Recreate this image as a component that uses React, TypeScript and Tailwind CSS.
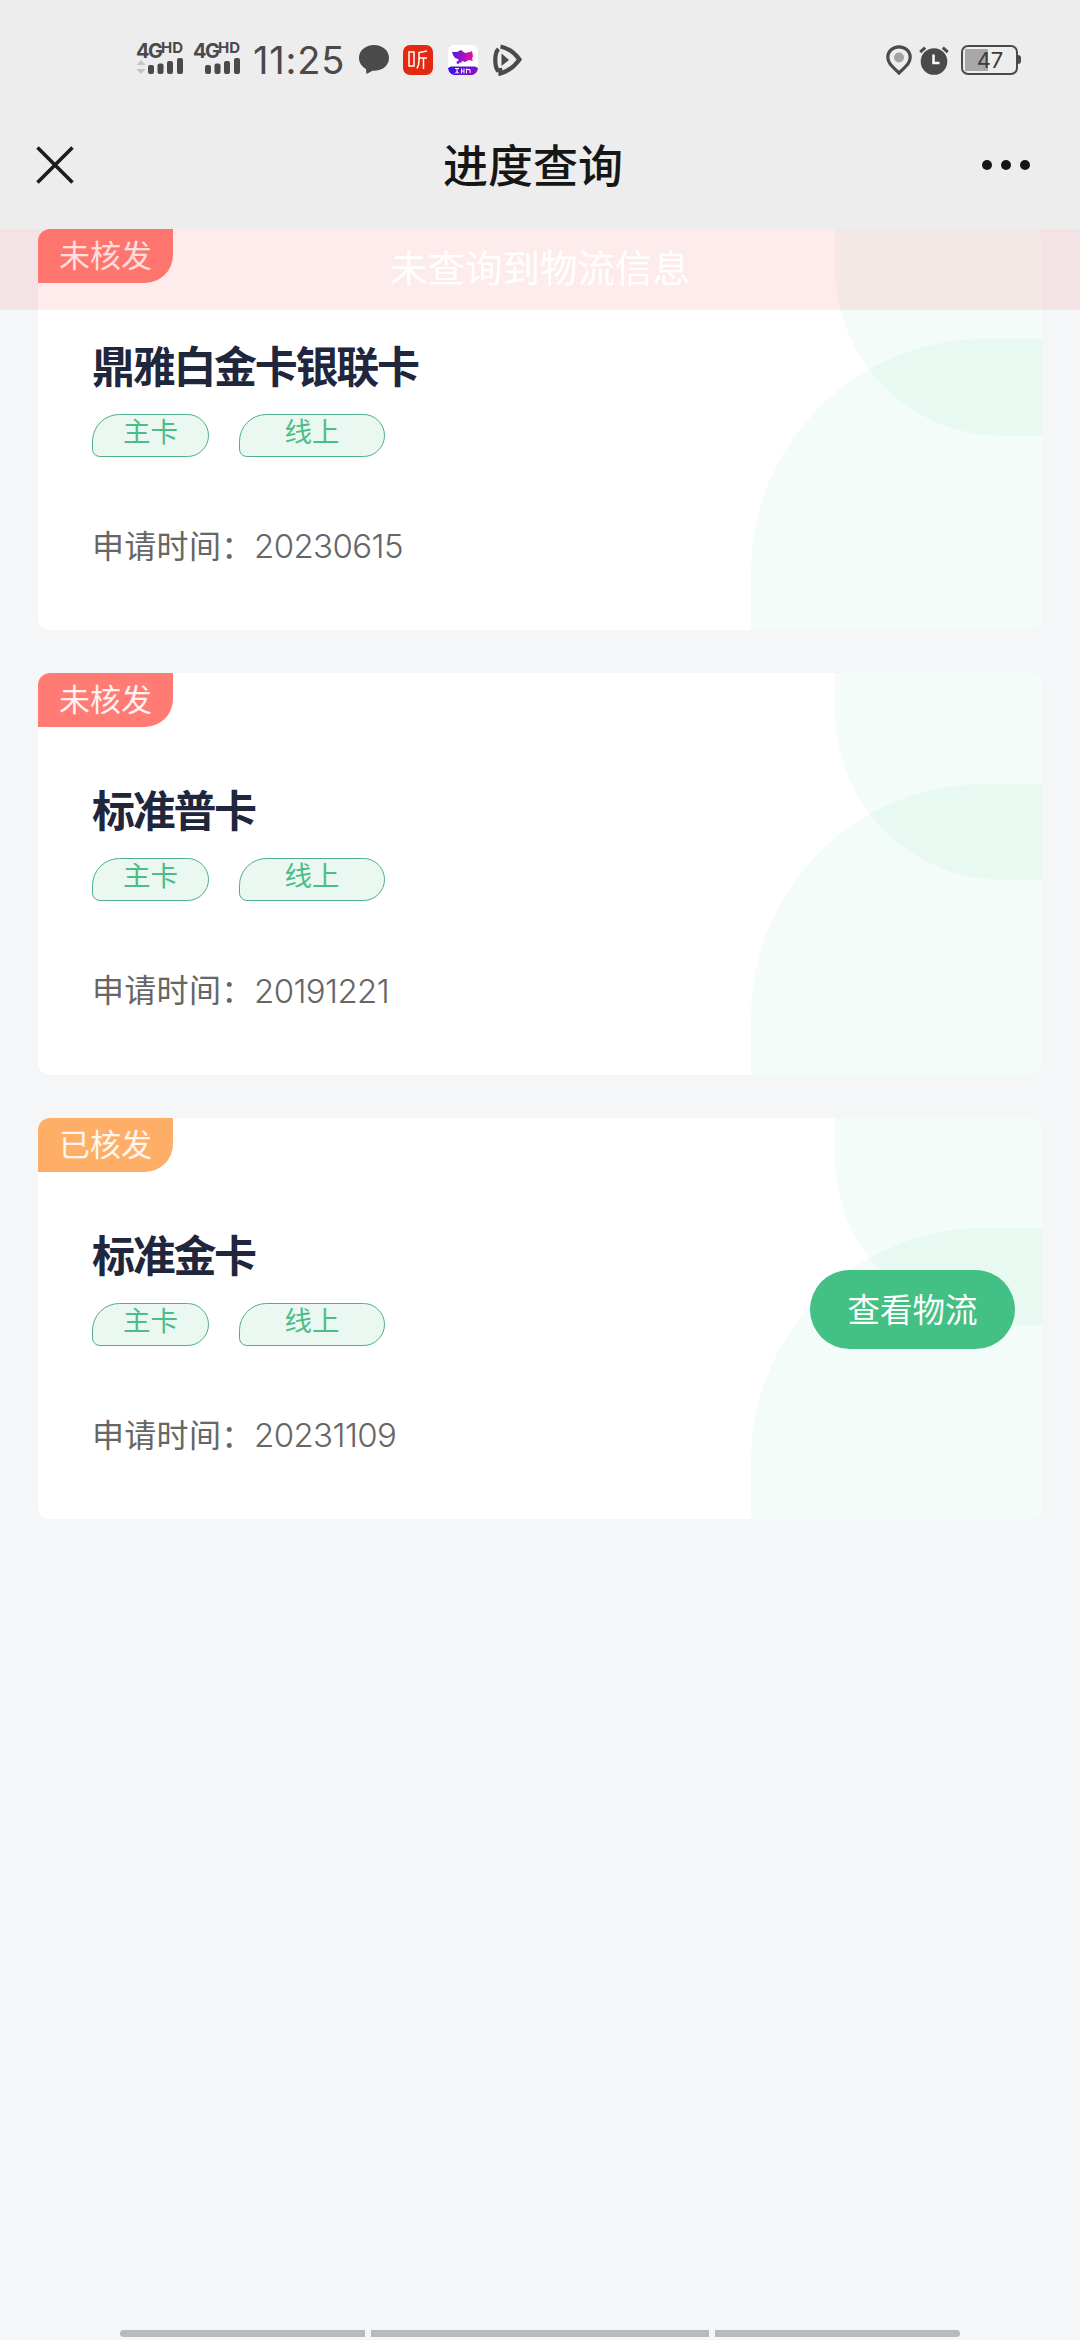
import React from 'react';
import clsx from 'clsx';

const cards = [
  { id: 1, status: '未核发', issued: false, name: '鼎雅白金卡银联卡', date: '20230615' },
  { id: 2, status: '未核发', issued: false, name: '标准普卡', date: '20191221' },
  { id: 3, status: '已核发', issued: true, name: '标准金卡', date: '20231109' },
];

function Signal({ arrows }: { arrows?: boolean }) {
  return (
    <div className="w-[47px] h-8">
      <div className="flex items-start h-[15px] font-['Inter'] font-bold text-[#4a4a4a]">
        <span className="w-[25px] text-[20px] leading-[16px] tracking-[-1.500px]">4G</span>
        <span className="text-[15px] leading-[10px]">HD</span>
      </div>
      <svg className="block" width="47" height="17" viewBox="0 0 47 17">
        {arrows && <path d="M0.5 7 5 2l4.500 5zM0.500 11h9L5 16z" fill="#c4c4c4" />}
        <g fill="#4a4a4a">
          <rect x="12" y="7" width="6" height="9" rx="2" />
          <rect x="21.500" y="5.500" width="6" height="10.500" rx="2" />
          <rect x="31" y="3" width="6" height="13" rx="2" />
          <rect x="41" y="0" width="6" height="16" rx="2" />
        </g>
      </svg>
    </div>
  );
}

function StatusBar() {
  return (
    <div className="flex h-[120px] pl-[136px] pr-[59px] pt-[43px]">
      <Signal arrows />
      <div className="ml-2.5">
        <Signal />
      </div>
      <span className="ml-[13px] w-[96px] text-[38px] leading-[35px] tracking-[0.800px] font-['Inter'] text-[#4a4a4a] whitespace-nowrap">11:25</span>
      <svg className="ml-[9px] mt-[2px]" width="32" height="30" viewBox="0 0 32 30">
        <path d="M16 0C7.500 0 1 5.500 1 13c0 4.500 2.500 8.500 7 11l.5 5 6-3.300c9.500.5 16.500-5 16.500-12.700C31 5.500 24.500 0 16 0z" fill="#4a4a4a" />
      </svg>
      <svg className="ml-[13px] mt-[2px]" width="30" height="30" viewBox="0 0 30 30">
        <rect width="30" height="30" rx="7" fill="#e3290f" />
        <path d="M6 7h5v14H6zM24 6l-8 1.500V16c0 3-.5 5-2 7.500M16 13h8M20.500 13v11" fill="none" stroke="#fff" strokeWidth="1.500" />
      </svg>
      <svg className="ml-[15px] mt-[2px]" width="30" height="30" viewBox="0 0 30 30">
        <defs>
          <linearGradient id="bull">
            <stop offset="0" stopColor="#4a1fe0" />
            <stop offset="1" stopColor="#f00aa0" />
          </linearGradient>
          <linearGradient id="ribbon">
            <stop offset="0" stopColor="#3a12dc" />
            <stop offset="1" stopColor="#8a10c8" />
          </linearGradient>
        </defs>
        <rect width="30" height="30" rx="6" fill="#fff" />
        <path d="M4 7h5l4-2 4 3 5-1 2-1 1 5-1 3 1 2-4-1-2 1-2 1-3-1-1 2-2-1-1-3-3-1-2-3z" fill="url(#bull)" />
        <circle cx="10" cy="17.500" r="1.400" fill="#7a10d0" />
        <path d="M0 23l3-1.500h24l3 1.500c-.5 4-2.500 6.500-6 7H6c-3.500-.5-5.500-3-6-7z" fill="url(#ribbon)" />
        <path d="M7 23.500h4M9 23.500v5M7 28.500l2-2 2 2M13.500 23.500v5M16 23.500v5M13.500 26h2.500M18.500 23.500v5M18.500 24.500h3.500v3.500" stroke="#fff" strokeWidth="1" fill="none" />
      </svg>
      <svg className="ml-[14px] mt-px" width="32" height="32" viewBox="0 0 32 32">
        <g fill="none" stroke="#4a4a4a" strokeWidth="4.200">
          <path d="M6.500 27.500C2.200 22.500 2.200 9 6.500 5" />
          <path d="M8.500 2.500Q20 5 27.500 15.500 20 26 8.500 29.500L8 24" />
        </g>
        <path d="M9.500 9.500L17 16l-7.500 6z" fill="#4a4a4a" />
      </svg>

      <svg className="ml-auto mt-[2px]" width="26" height="30" viewBox="0 0 26 30">
        <path d="M13 1.800C6.500 1.800 1.800 6.500 1.800 12.300 1.800 18.500 7 22 13 28c6-6 11.200-9.500 11.200-15.700C24.200 6.500 19.500 1.800 13 1.800z" fill="none" stroke="#4a4a4a" strokeWidth="3.200" />
        <circle cx="13" cy="12.500" r="5" fill="#a3a3a3" />
      </svg>
      <svg className="ml-[7px] mt-[2px]" width="30" height="30" viewBox="0 0 30 30">
        <circle cx="15" cy="16.500" r="13.300" fill="#4a4a4a" />
        <path d="M1.200 7.200l5-4.500M28.800 7.200l-5-4.500" stroke="#4a4a4a" strokeWidth="3" />
        <path d="M14.500 9.500v8.500h6" fill="none" stroke="#fff" strokeWidth="2.500" />
      </svg>
      <div className="relative ml-[12px] mt-[2px] flex items-start">
        <div className="w-[57px] h-[30px] border-[2px] border-[#4a4a4a] rounded-[7px] p-[2px]">
          <div className="w-[23px] h-full bg-[#a8a8a8]" />
        </div>
        <div className="w-[3px] h-[9px] mt-[10px] bg-[#4a4a4a] rounded-r-sm" />
        <span className="absolute left-0 top-0 w-[58px] text-center text-[22px] leading-[30px] font-['Inter'] text-[#3c3c3c]">47</span>
      </div>
    </div>
  );
}

function NavBar() {
  return (
    <div className="flex items-center h-[109px] pl-[36px] pr-[50px] pb-[20px]">
      <svg width="38" height="38" viewBox="0 0 38 38">
        <path d="M1.500 1.500l35 35M36.500 1.500l-35 35" stroke="#1c1c1c" strokeWidth="3.600" />
      </svg>
      <h1 className="flex-1 pl-[10px] pb-[2px] text-center text-[45px] leading-[60px] font-medium text-[#161616]">进度查询</h1>
      <div className="flex gap-[9px]">
        <span className="size-[10px] rounded-full bg-[#161616]" />
        <span className="size-[10px] rounded-full bg-[#161616]" />
        <span className="size-[10px] rounded-full bg-[#161616]" />
      </div>
    </div>
  );
}

function Tag({ className, children }: { className: string; children: React.ReactNode }) {
  return (
    <span
      className={clsx(
        'h-[43px] border border-[#4fae85] bg-[#ebf8f2] text-center text-[27.500px] leading-[31px] text-[#4cbc88] rounded-tl-[28px] rounded-tr-[22px] rounded-br-[22px] rounded-bl-[8px]',
        className
      )}
    >
      {children}
    </span>
  );
}

function CardItem({ card }: { card: (typeof cards)[number] }) {
  return (
    <div className="relative h-[401.200px] bg-white rounded-xl overflow-hidden">
      <div className="absolute right-0 top-0 w-[207px] h-[207px] rounded-bl-[168px] bg-[#30cc8c]/5" />
      <div className="absolute right-0 bottom-0 w-[291px] h-[291px] rounded-tl-[233px] bg-[#30cc8c]/6" />

      <div
        className={clsx(
          'w-[135px] h-[54px] rounded-br-[28px] text-center text-[31px] leading-[49px] text-white/90',
          card.issued ? 'bg-[#ffae68]' : 'bg-[#ff7b73]'
        )}
      >
        {card.status}
      </div>

      <div className="relative pl-[54px] pt-[51px]">
        <h2 className="text-[43px] leading-[60px] font-bold tracking-[-2.300px] text-[#20263c]">{card.name}</h2>
        <div className="flex gap-[30px] mt-[20px]">
          <Tag className="w-[117px]">主卡</Tag>
          <Tag className="w-[146px]">线上</Tag>
        </div>
        <p className="flex items-center mt-[66px] h-[48px] text-[32px] text-[#666]">
          <span className="w-[162px] pb-[6px] whitespace-nowrap tracking-[0.300px]">申请时间：</span>
          <span className="font-['Inter'] text-[33px] font-light tracking-[-0.600px]">{card.date}</span>
        </p>
      </div>

      {card.issued && (
        <button className="absolute right-[27px] top-[152px] w-[205px] h-[79px] rounded-full bg-[#43c083] text-white text-[32.500px] leading-[75px] pb-1">
          查看物流
        </button>
      )}
    </div>
  );
}

export default function App() {
  return (
    <div className="flex flex-col w-[1080px] h-[2340px] bg-[#f4f6f8] overflow-hidden font-['Noto_Sans_CJK_SC',sans-serif]">
      <header className="bg-[#ededed]">
        <StatusBar />
        <NavBar />
      </header>

      <main className="relative flex-1">
        <div className="flex flex-col gap-[43.200px] px-[38px]">
          {cards.map((card) => (
            <CardItem key={card.id} card={card} />
          ))}
        </div>

        {/* toast, fading out over the first card */}
        <div className="absolute inset-x-0 top-0 h-[81px] bg-[rgba(247,70,70,0.11)] text-center text-[37.500px] leading-[74px] text-white">
          未查询到物流信息
        </div>
      </main>

      <div className="flex gap-[6px] px-[120px] pb-[3px]">
        <div className="w-[245px] h-[7px] bg-[#b8babc] rounded-l-full" />
        <div className="flex-1 h-[7px] bg-[#b8babc]" />
        <div className="w-[245px] h-[7px] bg-[#b8babc] rounded-r-full" />
      </div>
    </div>
  );
}
